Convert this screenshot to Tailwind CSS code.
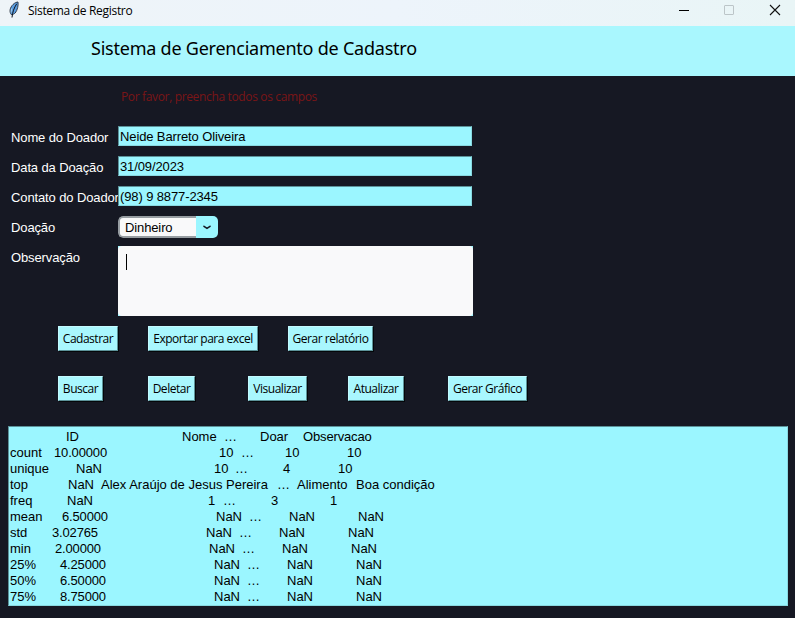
<!DOCTYPE html>
<html lang="pt-BR">
<head>
<meta charset="utf-8">
<title>Sistema de Registro</title>
<script src="https://cdn.jsdelivr.net/npm/@tailwindcss/browser@4"></script>
</head>
<body class="w-[795px] h-[618px] overflow-hidden bg-[#161823] font-['Liberation_Sans',Arial,sans-serif] text-[13px] text-black flex flex-col whitespace-nowrap">
  <header class="h-[26px] shrink-0 bg-linear-to-r from-[#eef4f8] via-[#edf4fb] to-[#e9f5f6] flex items-start">
    <svg class="ml-2 mt-px w-[12px] h-[17px] shrink-0" viewBox="0 0 12 17">
      <path d="M3.200 13.500C1 10.500 2 6.500 5 3.500C7 1.600 9 1 10 1C10.500 4 9.600 9 7.200 12C6 13 4.500 13.800 3.200 13.500Z" fill="#5a9de0" stroke="#26303e" stroke-width=".9"/>
      <path d="M4 16.500C4.500 11 6 7 8.700 2.800" stroke="#0d131d" stroke-width="1" fill="none"/>
      <path d="M3 11.500L3.700 7.500" stroke="#b9d7ed" stroke-width=".8"/>
    </svg>
    <span class="ml-2 mt-[3px] leading-4 font-['Open_Sans',sans-serif] text-[12px] tracking-[-0.31px]">Sistema de Registro</span>
    <svg class="ml-auto mr-3 mt-[3px] w-[106px] h-[14px] shrink-0" viewBox="0 0 106 14" fill="none">
      <path d="M2 7.500H12" stroke="#000"/>
      <rect x="47.500" y="2.500" width="9" height="9" rx=".5" stroke="#bcc5c8"/>
      <path d="M93 2L103 12M103 2L93 12" stroke="#111" stroke-width="1.100"/>
    </svg>
  </header>
  <h1 class="h-[50px] shrink-0 bg-[#a9f7fe] pl-[91px] pt-[8px] leading-7 font-['Noto_Sans',sans-serif] text-[18px] tracking-[-0.23px]">Sistema de Gerenciamento de Cadastro</h1>
  <main class="px-2 flex flex-col">
    <p class="h-[50px] pl-[113px] pt-[13px] leading-4 font-['Open_Sans',sans-serif] text-[12px] font-medium tracking-[-0.35px] text-[#7a1517]">Por favor, preencha todos os campos</p>
    <form class="grid grid-cols-[107px_355px] auto-rows-[30px] text-[13px] tracking-[-0.12px] pl-[3px]">
      <label class="text-white pt-[4px] leading-4">Nome do Doador</label>
      <div class="h-[20px] w-[354px] bg-[#9bf6ff] border border-t-[#5c9299] border-l-[#5c9299] border-b-[#88d9e1] border-r-[#88d9e1] pl-px leading-[19px]">Neide Barreto Oliveira</div>
      <label class="text-white pt-[4px] leading-4">Data da Doação</label>
      <div class="h-[20px] w-[354px] bg-[#9bf6ff] border border-t-[#5c9299] border-l-[#5c9299] border-b-[#88d9e1] border-r-[#88d9e1] pl-px leading-[19px]">31/09/2023</div>
      <label class="text-white pt-[4px] leading-4">Contato do Doador</label>
      <div class="h-[20px] w-[354px] bg-[#9bf6ff] border border-t-[#5c9299] border-l-[#5c9299] border-b-[#88d9e1] border-r-[#88d9e1] pl-px leading-[19px] z-10">(98) 9 8877-2345</div>
      <label class="text-white pt-[4px] leading-4">Doação</label>
      <div class="w-[100px] h-[22px] flex rounded-[5px] overflow-hidden">
        <span class="w-[78px] bg-[#f9f9fa] border-2 border-r-0 border-[#979da2] rounded-l-[5px] pl-[5px] leading-[19px]">Dinheiro</span>
        <span class="w-[22px] bg-[#9bf6ff] flex items-center justify-center">
          <svg class="w-2 h-2" viewBox="0 0 8 8" fill="none"><path d="M1 3.300L4 5.300L7 3.300" stroke="#161823" stroke-width="1.600" stroke-linecap="round"/></svg>
        </span>
      </div>
      <label class="text-white pt-[4px] leading-4">Observação</label>
      <div class="h-[70px] bg-[#9bf6ff]"><div class="h-full rounded-[4px] bg-[#f9f9fa] pl-2 pt-2"><div class="w-px h-4 bg-black"></div></div></div>
    </form>
    <div class="h-[50px] mt-[50px] pl-[50px] grid grid-cols-[90px_140px_1fr] items-start font-['Open_Sans',sans-serif] text-[12px] tracking-[-0.48px]">
      <button class="w-[60px] h-[25px] bg-[#a9f7fe] border border-t-[#c4faff] border-l-[#c4faff] border-b-[#5c9299] border-r-[#5c9299] shadow-[1px_1px_0_#05070a] leading-[23px]">Cadastrar</button>
      <button class="w-[110px] h-[25px] bg-[#a9f7fe] border border-t-[#c4faff] border-l-[#c4faff] border-b-[#5c9299] border-r-[#5c9299] shadow-[1px_1px_0_#05070a] leading-[23px]">Exportar para excel</button>
      <button class="w-[85px] h-[25px] bg-[#a9f7fe] border border-t-[#c4faff] border-l-[#c4faff] border-b-[#5c9299] border-r-[#5c9299] shadow-[1px_1px_0_#05070a] leading-[23px]">Gerar relatório</button>
    </div>
    <div class="h-[50px] pl-[50px] grid grid-cols-[90px_100px_100px_100px_1fr] items-start font-['Open_Sans',sans-serif] text-[12px] tracking-[-0.48px]">
      <button class="w-[45px] h-[25px] bg-[#a9f7fe] border border-t-[#c4faff] border-l-[#c4faff] border-b-[#5c9299] border-r-[#5c9299] shadow-[1px_1px_0_#05070a] leading-[23px]">Buscar</button>
      <button class="w-[47px] h-[25px] bg-[#a9f7fe] border border-t-[#c4faff] border-l-[#c4faff] border-b-[#5c9299] border-r-[#5c9299] shadow-[1px_1px_0_#05070a] leading-[23px]">Deletar</button>
      <button class="w-[59px] h-[25px] bg-[#a9f7fe] border border-t-[#c4faff] border-l-[#c4faff] border-b-[#5c9299] border-r-[#5c9299] shadow-[1px_1px_0_#05070a] leading-[23px]">Visualizar</button>
      <button class="w-[56px] h-[25px] bg-[#a9f7fe] border border-t-[#c4faff] border-l-[#c4faff] border-b-[#5c9299] border-r-[#5c9299] shadow-[1px_1px_0_#05070a] leading-[23px]">Atualizar</button>
      <button class="w-[79px] h-[25px] bg-[#a9f7fe] border border-t-[#c4faff] border-l-[#c4faff] border-b-[#5c9299] border-r-[#5c9299] shadow-[1px_1px_0_#05070a] leading-[23px]">Gerar Gráfico</button>
    </div>
    <section class="w-[780px] h-[180px] bg-[#9bf6ff] border border-t-[#5c9299] border-l-[#5c9299] border-b-[#88d9e1] border-r-[#88d9e1] pl-px pt-[2px] leading-4 text-[13px]">
      <div class="grid grid-cols-[56px_116px_42px_36px_43px_auto]"><span></span><span>ID</span><span>Nome</span><span>…</span><span>Doar</span><span class="tracking-[-0.15px]">Observacao</span></div>
      <div class="grid grid-cols-[44px_165px_22px_44px_62px_auto]"><span>count</span><span class="tracking-[-0.15px]">10.00000</span><span>10</span><span>…</span><span>10</span><span>10</span></div>
      <div class="grid grid-cols-[66px_138px_21px_48px_55px_auto]"><span>unique</span><span>NaN</span><span>10</span><span>…</span><span>4</span><span>10</span></div>
      <div class="grid grid-cols-[58px_33px_176px_20px_59px_auto]"><span>top</span><span>NaN</span><span>Alex Araújo de Jesus Pereira</span><span>…</span><span>Alimento</span><span>Boa condição</span></div>
      <div class="grid grid-cols-[57px_141px_15px_48px_59px_auto]"><span>freq</span><span>NaN</span><span>1</span><span>…</span><span>3</span><span>1</span></div>
      <div class="grid grid-cols-[52px_154px_33px_40px_69px_auto]"><span>mean</span><span class="tracking-[-0.15px]">6.50000</span><span>NaN</span><span>…</span><span>NaN</span><span>NaN</span></div>
      <div class="grid grid-cols-[42px_154px_33px_40px_69px_auto]"><span>std</span><span class="tracking-[-0.15px]">3.02765</span><span>NaN</span><span>…</span><span>NaN</span><span>NaN</span></div>
      <div class="grid grid-cols-[45px_154px_33px_40px_69px_auto]"><span>min</span><span class="tracking-[-0.15px]">2.00000</span><span>NaN</span><span>…</span><span>NaN</span><span>NaN</span></div>
      <div class="grid grid-cols-[50px_154px_33px_40px_69px_auto]"><span>25%</span><span class="tracking-[-0.15px]">4.25000</span><span>NaN</span><span>…</span><span>NaN</span><span>NaN</span></div>
      <div class="grid grid-cols-[50px_154px_33px_40px_69px_auto]"><span>50%</span><span class="tracking-[-0.15px]">6.50000</span><span>NaN</span><span>…</span><span>NaN</span><span>NaN</span></div>
      <div class="grid grid-cols-[50px_154px_33px_40px_69px_auto]"><span>75%</span><span class="tracking-[-0.15px]">8.75000</span><span>NaN</span><span>…</span><span>NaN</span><span>NaN</span></div>
    </section>
  </main>
</body>
</html>
